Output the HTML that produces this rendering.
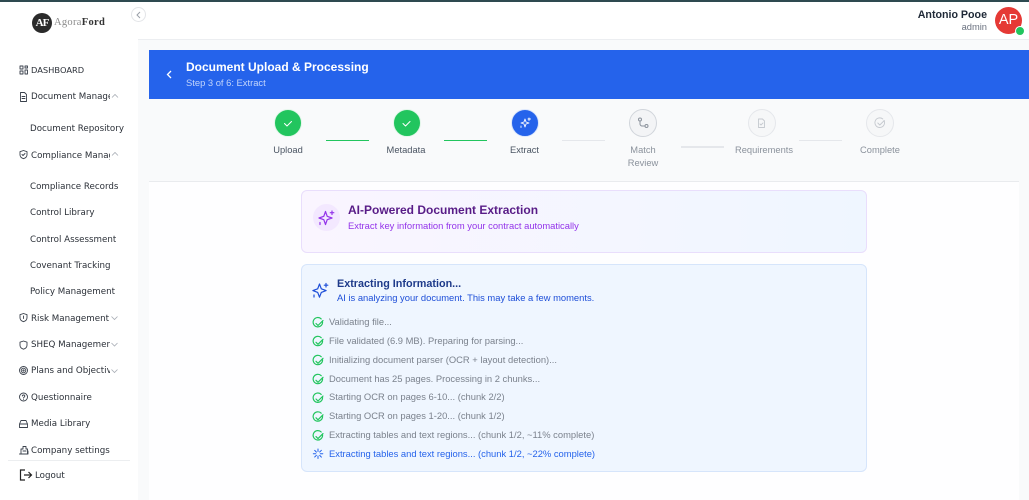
<!DOCTYPE html>
<html lang="en"><head><meta charset="utf-8"><title>Document Upload</title>
<style>
*{box-sizing:border-box}
html,body{margin:0;padding:0;width:1029px;height:500px;overflow:hidden;background:#f9fafb;font-family:"Liberation Sans",sans-serif}
.a{position:absolute;white-space:nowrap}
svg{position:absolute;overflow:visible}
.nav{position:absolute;left:31px;margin-top:1px;font:8.7px/12px "DejaVu Sans",sans-serif;color:#2b3038;white-space:nowrap;overflow:hidden}
.sub{left:30px}
.ic{fill:none;stroke:#3a414c;stroke-width:1;stroke-linecap:round;stroke-linejoin:round}
.chev{fill:none;stroke:#a8adb5;stroke-width:.8}
.step{position:absolute;width:28px;height:28px;border-radius:50%;top:109px}
.lbl{position:absolute;width:80px;text-align:center;font-size:9.33px;line-height:13px;top:143.5px;color:#4b5563}
.off{color:#8b929c}
.line{position:absolute;height:1.5px;top:139.5px;width:43px;background:#e5e7eb}
.row{position:absolute;left:329px;font-size:9.4px;line-height:12px;color:#7b828d;white-space:nowrap}
.ck{fill:none;stroke:#22c55e;stroke-width:1.2;stroke-linecap:round;stroke-linejoin:round}
</style></head><body>
<div class="a" style="left:0;top:0;width:1029px;height:2px;background:#2e4a50"></div>
<div class="a" style="left:0;top:2px;width:138px;height:498px;background:#fff"></div>
<div class="a" style="left:138px;top:2px;width:891px;height:38px;background:#fff;border-bottom:1px solid #eceef1"></div>

<!-- logo -->
<div class="a" style="left:32px;top:13px;width:20px;height:20px;border-radius:50%;background:#2b2b2b;color:#fff;font:bold 11px/20px 'Liberation Serif',serif;text-align:center;letter-spacing:-1px">AF</div>
<div class="a" style="left:54px;top:16px;font:10.5px/14px 'Liberation Serif',serif;color:#8a8a8a;letter-spacing:.3px">Agora<b style="color:#333">Ford</b></div>
<div class="a" style="left:131px;top:7px;width:15px;height:15px;border-radius:50%;background:#fff;border:1px solid #e3e5e8"></div>
<svg style="left:0;top:0" width="150" height="30"><path d="M140 12l-3 3 3 3" fill="none" stroke="#9aa0a8" stroke-width="1"/></svg>

<!-- sidebar -->
<svg style="left:0;top:0" width="138" height="500">
<g class="ic" style="stroke-width:.9">
<path d="M20 66h3v3h-3zM25 66h2.500v2h-2.500zM20 71h3v3h-3zM25 70h2.500v4h-2.500z"/>
<path d="M20.500 92.500h4l2 2v7h-6zM22 96.500h3M22 98.500h3"/>
<path d="M23.500 150.500l3.500 1.200v3c0 2-1.500 3.300-3.500 4-2-.7-3.500-2-3.500-4v-3zM22 154.500l1 1 2-2"/>
<path d="M23.500 313.500l3.500 1.200v3c0 2-1.500 3.300-3.500 4-2-.7-3.500-2-3.500-4v-3zM23.500 316v2.500"/>
<path d="M23.500 341l3.500 1.200v3c0 2-1.500 3.300-3.500 4-2-.7-3.500-2-3.500-4v-3z"/>
<circle cx="23.500" cy="370.500" r="4"/><circle cx="23.500" cy="370.500" r="2.300"/><circle cx="23.500" cy="370.500" r=".7"/>
<circle cx="23.500" cy="397" r="4"/><path d="M22.300 396c.2-1.400 2.500-1.300 2.500.1 0 1-1.300 1-1.300 2M23.500 399.300v.1"/>
<path d="M19.500 424l1.500-3.500h5l1.500 3.500v3.500h-8zM19.500 424h8"/>
<path d="M21 454v-5h2v-2.500h3v2.500h1.500v5zM19.500 454h8.500v-3M23 451h3"/>
</g>
<g class="chev">
<path d="M112 97.500l3-3 3 3M112 155.500l3-3 3 3"/>
<path d="M111.500 316.500l3 3 3-3M111.500 343l3 3 3-3M111.500 369.500l3 3 3-3"/>
</g>
<line x1="8" y1="460.500" x2="130" y2="460.500" stroke="#eceef0"/>
<path d="M25 470h-4.500v10H25M24 475h7.500M28.500 472l3 3-3 3" fill="none" stroke="#222" stroke-width="1.200"/>
</svg>
<div class="nav" style="top:62.500px;font-size:8.3px">DASHBOARD</div>
<div class="nav" style="top:90px;width:79px">Document Management</div>
<div class="nav sub" style="top:122px">Document Repository</div>
<div class="nav" style="top:149px;width:79px">Compliance Management</div>
<div class="nav sub" style="top:180px">Compliance Records</div>
<div class="nav sub" style="top:206px">Control Library</div>
<div class="nav sub" style="top:233px">Control Assessment</div>
<div class="nav sub" style="top:259px">Covenant Tracking</div>
<div class="nav sub" style="top:285px">Policy Management</div>
<div class="nav" style="top:312px;width:79px">Risk Management</div>
<div class="nav" style="top:338px;width:79px">SHEQ Management</div>
<div class="nav" style="top:364px;width:79px">Plans and Objectives</div>
<div class="nav" style="top:391px">Questionnaire</div>
<div class="nav" style="top:417px">Media Library</div>
<div class="nav" style="top:444px">Company settings</div>
<div class="nav" style="top:469px;left:35px">Logout</div>

<!-- user -->
<div class="a" style="right:42px;top:8.500px;font:bold 10.67px/13px 'Liberation Sans',sans-serif;color:#1f2937">Antonio Pooe</div>
<div class="a" style="right:42px;top:20.500px;font:9.33px/12px 'Liberation Sans',sans-serif;color:#6b7280">admin</div>
<div class="a" style="left:995px;top:7px;width:27px;height:27px;border-radius:50%;background:#e53935;color:#fff;font:14.5px/27px 'Liberation Sans',sans-serif;text-align:center">AP</div>
<div class="a" style="left:1015px;top:26px;width:10px;height:10px;border-radius:50%;background:#22c55e;border:1px solid #fff"></div>

<!-- main -->
<div class="a" style="left:149px;top:50px;width:870px;height:450px;background:#fefeff"></div>
<div class="a" style="left:149px;top:50px;width:880px;height:49px;background:#2563eb"></div>
<svg style="left:149px;top:50px" width="60" height="49"><path d="M22 21l-3.500 3.500L22 28" fill="none" stroke="#fff" stroke-width="1.300"/></svg>
<div class="a" style="left:186px;top:60px;font:bold 12px/15px 'Liberation Sans',sans-serif;color:#fff">Document Upload &amp; Processing</div>
<div class="a" style="left:186px;top:77px;font:9.4px/12px 'Liberation Sans',sans-serif;color:#c3d5fb">Step 3 of 6: Extract</div>

<!-- stepper -->
<div class="a" style="left:149px;top:99px;width:870px;height:83px;background:#f9fafb;border-bottom:1px solid #e9ebee"></div>
<div class="step" style="left:274px;background:#22c55e;border:1px solid #e3f6ea"></div>
<div class="step" style="left:392.500px;background:#22c55e;border:1px solid #e3f6ea"></div>
<div class="step" style="left:510.500px;background:#2563eb;border:1px solid #dbe6fc"></div>
<div class="step" style="left:629px;background:#f3f4f6;border:1.500px solid #d1d5db"></div>
<div class="step" style="left:747.500px;background:#f6f7f8;border:1.500px solid #e5e7eb"></div>
<div class="step" style="left:866px;background:#f6f7f8;border:1.500px solid #e5e7eb"></div>
<svg style="left:0;top:0" width="1029" height="200" fill="none" stroke-linecap="round" stroke-linejoin="round">
<path d="M284.500 123.500l2.500 2.500 4.500-4.500M403 123.500l2.500 2.500 4.500-4.500" stroke="#fff" stroke-width="1"/>
<path d="M525 119l1 3 3 1-3 1-1 3-1-3-3-1 3-1zM529 118v2.500M528 119h2.500M521 126v1.500" stroke="#fff" stroke-width=".9"/>
<circle cx="640" cy="119.500" r="1.500" stroke="#8b929c"/><circle cx="646.500" cy="126" r="1.500" stroke="#8b929c"/><path d="M640 121v3c0 1 1 2 2 2h3" stroke="#8b929c"/>
<path d="M758.500 119h4l2 2v6.500h-6zM760 124l1 1 2-2" stroke="#c5c9cf" stroke-width=".9"/>
<path d="M884 120.500a4.800 4.800 0 1 1-1.200-1.500M877.800 123l2 2 4.500-4.500" stroke="#c5c9cf" stroke-width=".9"/>
</svg>
<div class="line" style="left:326px;background:#22c55e"></div>
<div class="line" style="left:444px;background:#22c55e"></div>
<div class="line" style="left:562px"></div>
<div class="line" style="left:681px;top:146px"></div>
<div class="line" style="left:799px"></div>
<div class="lbl" style="left:248px;color:#4b5563">Upload</div>
<div class="lbl" style="left:366px">Metadata</div>
<div class="lbl" style="left:484.500px">Extract</div>
<div class="lbl off" style="left:603px">Match<br>Review</div>
<div class="lbl off" style="left:724px">Requirements</div>
<div class="lbl off" style="left:840px">Complete</div>

<!-- card 1 -->
<div class="a" style="left:301px;top:190px;width:566px;height:63px;border-radius:6px;border:1px solid #e9defc;background:linear-gradient(90deg,#faf5ff,#eff6ff)"></div>
<div class="a" style="left:313px;top:204px;width:27px;height:27px;border-radius:50%;background:#f3e8ff"></div>
<div class="a" style="left:348px;top:202px;font:bold 12px/16px 'Liberation Sans',sans-serif;color:#581c87">AI-Powered Document Extraction</div>
<div class="a" style="left:348px;top:219px;font:9.4px/13px 'Liberation Sans',sans-serif;color:#9333ea">Extract key information from your contract automatically</div>

<!-- card 2 -->
<div class="a" style="left:301px;top:264px;width:566px;height:208px;border-radius:6px;border:1px solid #d6e5fb;background:#eff6ff"></div>
<div class="a" style="left:337px;top:276.500px;font:bold 10.8px/14px 'Liberation Sans',sans-serif;color:#1e3a8a">Extracting Information...</div>
<div class="a" style="left:337px;top:290.500px;font:9.4px/13px 'Liberation Sans',sans-serif;color:#1d4ed8">AI is analyzing your document. This may take a few moments.</div>

<svg style="left:0;top:0" width="400" height="480" fill="none" stroke-linecap="round" stroke-linejoin="round">
<path d="M325.500 211.500l1.700 4.800 4.800 1.700-4.800 1.700-1.700 4.800-1.700-4.800-4.800-1.700 4.800-1.700zM332 211v3.500M330.300 212.700h3.500M320 222.500v2" stroke="#9333ea" stroke-width="1.200"/>
<path d="M319.500 284l1.800 4.800 4.800 1.800-4.800 1.800-1.800 4.800-1.800-4.800-4.800-1.800 4.800-1.800zM326 283.500v3.500M324.300 285.200h3.500M314 295v2" stroke="#1d4ed8" stroke-width="1.200"/>
<g class="ck" transform="translate(0 2)">
<path d="M322.500 319.500a4.700 4.700 0 1 1-1.300-2.600M316 321.500l2 2 5-5"/>
<path d="M322.500 338.300a4.700 4.700 0 1 1-1.300-2.600M316 340.300l2 2 5-5"/>
<path d="M322.500 357.300a4.700 4.700 0 1 1-1.300-2.600M316 359.300l2 2 5-5"/>
<path d="M322.500 376.300a4.700 4.700 0 1 1-1.300-2.600M316 378.300l2 2 5-5"/>
<path d="M322.500 395a4.700 4.700 0 1 1-1.300-2.600M316 397l2 2 5-5"/>
<path d="M322.500 413.800a4.700 4.700 0 1 1-1.300-2.600M316 415.800l2 2 5-5"/>
<path d="M322.500 432.600a4.700 4.700 0 1 1-1.300-2.600M316 434.600l2 2 5-5"/>
</g>
<path d="M318 449v2.500M318 456v2.500M313.300 453.700h2.500M320.300 453.700h2.500M314.700 450.400l1.700 1.700M319.700 455.400l1.700 1.700M314.700 457l1.700-1.700M319.700 452l1.700-1.700" stroke="#2563eb" stroke-width="1"/>
</svg>
<div class="row" style="top:316px">Validating file...</div>
<div class="row" style="top:335px">File validated (6.9 MB). Preparing for parsing...</div>
<div class="row" style="top:354px">Initializing document parser (OCR + layout detection)...</div>
<div class="row" style="top:373px">Document has 25 pages. Processing in 2 chunks...</div>
<div class="row" style="top:391px">Starting OCR on pages 6-10... (chunk 2/2)</div>
<div class="row" style="top:410px">Starting OCR on pages 1-20... (chunk 1/2)</div>
<div class="row" style="top:429px">Extracting tables and text regions... (chunk 1/2, ~11% complete)</div>
<div class="row" style="top:448px;color:#2563eb">Extracting tables and text regions... (chunk 1/2, ~22% complete)</div>
</body></html>
